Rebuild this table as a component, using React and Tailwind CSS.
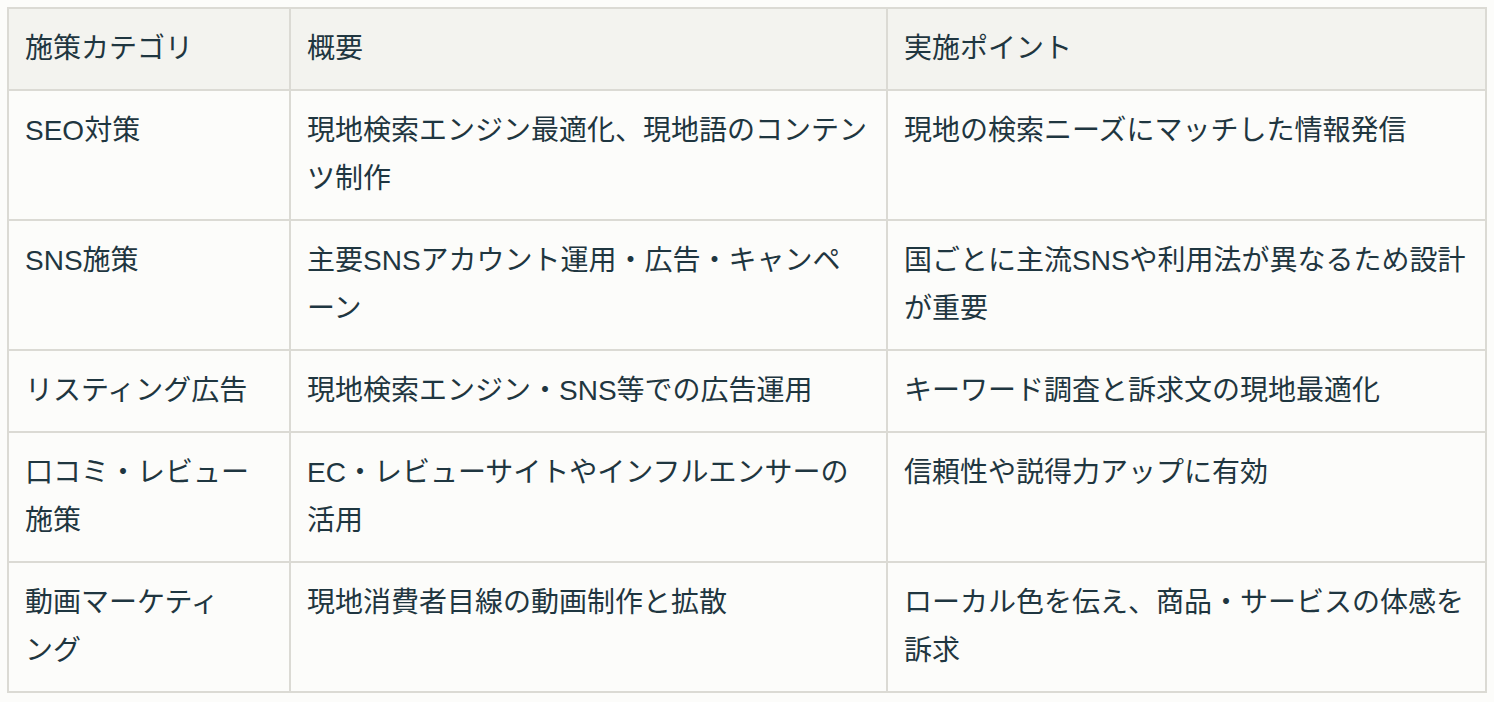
const rows = [
  { cat: ['SEO対策'], summary: ['現地検索エンジン最適化、現地語のコンテン', 'ツ制作'], point: ['現地の検索ニーズにマッチした情報発信'] },
  { cat: ['SNS施策'], summary: ['主要SNSアカウント運用・広告・キャンペ', 'ーン'], point: ['国ごとに主流SNSや利用法が異なるため設計', 'が重要'] },
  { cat: ['リスティング広告'], summary: ['現地検索エンジン・SNS等での広告運用'], point: ['キーワード調査と訴求文の現地最適化'] },
  { cat: ['口コミ・レビュー', '施策'], summary: ['EC・レビューサイトやインフルエンサーの', '活用'], point: ['信頼性や説得力アップに有効'] },
  { cat: ['動画マーケティ', 'ング'], summary: ['現地消費者目線の動画制作と拡散'], point: ['ローカル色を伝え、商品・サービスの体感を', '訴求'] },
];

function Lines({ lines }) {
  return lines.map((l, i) => (
    <span key={i} className="block whitespace-nowrap">{l}</span>
  ));
}

const cell = 'border-2 border-[#dbdad4] px-4 py-4 align-top text-left font-normal';

export default function App() {
  return (
    <div
      className="min-h-screen bg-[#fcfcfa] pl-[7px] pt-[7px] text-[28px] leading-[48px] text-[#1f3640]"
      style={{ fontFamily: '"Liberation Sans", "Noto Sans CJK JP", sans-serif' }}
    >
      <table className="w-[1480px] table-fixed border-collapse">
        <colgroup>
          <col className="w-[282px]" />
          <col className="w-[597px]" />
          <col />
        </colgroup>
        <thead>
          <tr className="bg-[#f3f3ef]">
            <th className={cell}>施策カテゴリ</th>
            <th className={cell}>概要</th>
            <th className={cell}>実施ポイント</th>
          </tr>
        </thead>
        <tbody>
          {rows.map((r, i) => (
            <tr key={i}>
              <td className={cell}><Lines lines={r.cat} /></td>
              <td className={cell}><Lines lines={r.summary} /></td>
              <td className={cell}><Lines lines={r.point} /></td>
            </tr>
          ))}
        </tbody>
      </table>
    </div>
  );
}
